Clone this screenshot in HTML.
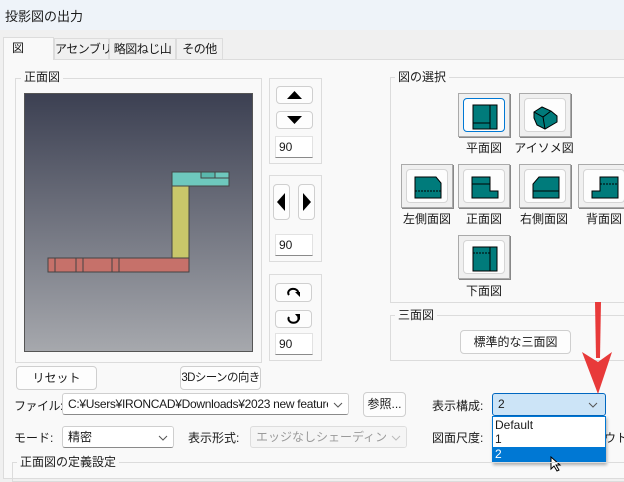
<!DOCTYPE html>
<html><head><meta charset="utf-8"><style>
*{box-sizing:border-box;margin:0;padding:0;white-space:nowrap}
body{width:624px;height:472px;overflow:hidden;background:#f0f0f0;font-family:"Liberation Sans","Noto Sans CJK JP",sans-serif;font-size:12px;color:#1a1a1a;position:relative}
.a{position:absolute}
.title{left:0;top:0;width:624px;height:30px;background:#eef3f9;padding:6px 5px;font-size:13px}
.panel{left:3px;top:59px;width:624px;height:420px;background:#f9f9f9;border:1px solid #dcdcdc}
.tab{top:38px;height:21px;border:1px solid #dcdcdc;border-bottom:none;background:#f0f0f0;text-align:center;line-height:20px;letter-spacing:-0.5px}
.grp{border:1px solid #dcdcdc}
.lg{background:#f9f9f9;padding:0 3px;line-height:14px}
.btn{background:#fdfdfd;border:1px solid #cfcfcf;border-radius:4px;text-align:center}
.inp{background:#fff;border:1px solid #e2e2e2;border-bottom:1px solid #8a8a8a;padding-left:3px;line-height:20px}
.vb{width:52px;height:44px;background:#f0f0f0;border:1px solid #aaa;box-shadow:1px 1px 0 #888}
.vb .in{position:absolute;left:4px;top:4px;width:42px;height:34px;background:#fdfdfd;border:1px solid #d5d5d5;border-radius:4px}
.lbl{text-align:center;width:70px}
.cb{background:#fff;border:1px solid #cfcfcf;border-bottom:1px solid #8a8a8a;border-radius:3px;padding-left:5px;line-height:20px;overflow:hidden}
.chev{position:absolute;right:0;top:0;width:20px;height:20px;background:inherit}
</style></head><body>
<div class="a title">投影図の出力</div>
<div class="a panel"></div>
<div class="a tab" style="left:3px;top:37px;width:51px;height:23px;background:#f9f9f9;text-align:left;padding-left:8px">図</div>
<div class="a tab" style="left:54px;width:55px">アセンブリ</div>
<div class="a tab" style="left:109px;width:67px">略図ねじ山</div>
<div class="a tab" style="left:176px;width:47px">その他</div>

<div class="a grp" style="left:15px;top:78px;width:247px;height:285px"></div>
<div class="a lg" style="left:21px;top:70px">正面図</div>
<div class="a" style="left:24px;top:93px;width:229px;height:259px;border:1px solid #555;background:linear-gradient(#3c4052,#a6a8ad)"></div>
<svg class="a" style="left:24px;top:93px" width="229" height="259">
<rect x="148" y="79" width="57" height="14" fill="#6ec8bd" stroke="#444"/>
<rect x="177" y="79" width="14" height="6" fill="#5ab8ad" stroke="#444"/>
<rect x="191" y="79" width="14" height="6" fill="#6ec8bd" stroke="#444"/>
<rect x="148" y="93" width="17" height="72" fill="#c9c76a" stroke="#444"/>
<rect x="24" y="165" width="141" height="14" fill="#c6716a" stroke="#444"/>
<line x1="31" y1="165" x2="31" y2="179" stroke="#444"/>
<line x1="52" y1="165" x2="52" y2="179" stroke="#444"/>
<line x1="59" y1="165" x2="59" y2="179" stroke="#444"/>
<line x1="88" y1="165" x2="88" y2="179" stroke="#444"/>
<line x1="95" y1="165" x2="95" y2="179" stroke="#444"/>
</svg>

<div class="a grp" style="left:269px;top:78px;width:53px;height:86px"></div>
<div class="a btn" style="left:276px;top:86px;width:37px;height:18px"><svg width="35" height="16"><path d="M10 12L17.5 4L25 12Z"/></svg></div>
<div class="a btn" style="left:276px;top:111px;width:37px;height:18px"><svg width="35" height="16"><path d="M10 4L17.5 12L25 4Z"/></svg></div>
<div class="a inp" style="left:275px;top:136px;width:38px;height:22px">90</div>

<div class="a grp" style="left:269px;top:175px;width:53px;height:87px"></div>
<div class="a btn" style="left:273px;top:184px;width:17px;height:36px"><svg width="15" height="34"><path d="M3 17L11 8V26Z"/></svg></div>
<div class="a btn" style="left:298px;top:184px;width:17px;height:36px"><svg width="15" height="34"><path d="M12 17L4 8V26Z"/></svg></div>
<div class="a inp" style="left:275px;top:234px;width:38px;height:22px">90</div>

<div class="a grp" style="left:269px;top:274px;width:53px;height:87px"></div>
<div class="a btn" style="left:275px;top:283px;width:37px;height:19px"><svg width="35" height="17"><path d="M13 11A5 4 0 1 1 22 10" fill="none" stroke="#000" stroke-width="2"/><path d="M19 8L24 8L24 13Z"/></svg></div>
<div class="a btn" style="left:275px;top:310px;width:37px;height:18px"><svg width="35" height="16"><path d="M13 6A5 4 0 1 0 22 6" fill="none" stroke="#000" stroke-width="2"/><path d="M19 3L24 3L24 9Z"/></svg></div>
<div class="a inp" style="left:275px;top:333px;width:38px;height:22px">90</div>

<div class="a grp" style="left:390px;top:77px;width:240px;height:226px"></div>
<div class="a lg" style="left:395px;top:70px">図の選択</div>
<div class="a vb" style="left:458px;top:93px"><div class="in" style="border:1px solid #0078d4"></div><svg class="a" style="left:13px;top:10px" width="26" height="26"><rect x="1" y="1" width="24" height="24" fill="#007b7b" stroke="#000"/><line x1="18" y1="1" x2="18" y2="25" stroke="#000"/><line x1="1" y1="19" x2="18" y2="19" stroke="#000"/></svg></div>
<div class="a vb" style="left:519px;top:93px"><div class="in"></div><svg class="a" style="left:13px;top:10px" width="26" height="26"><path d="M1 8L9 3L18 7L24 12L24 18L12 25L4 21L1 14Z" fill="#007b7b" stroke="#000"/><path d="M1 8L10 13L18 7M10 13L12 25" fill="none" stroke="#000"/></svg></div>
<div class="a lbl" style="left:449px;top:139px">平面図</div>
<div class="a lbl" style="left:509px;top:139px">アイソメ図</div>

<div class="a vb" style="left:401px;top:164px"><div class="in"></div><svg class="a" style="left:12px;top:11px" width="28" height="24"><path d="M1 1H22L27 7V22H1Z" fill="#007b7b" stroke="#000"/><line x1="1" y1="15" x2="27" y2="15" stroke="#000" stroke-dasharray="2 1"/></svg></div>
<div class="a vb" style="left:458px;top:164px"><div class="in"></div><svg class="a" style="left:12px;top:11px" width="28" height="24"><path d="M1 1H19V15H27V22H1Z" fill="#007b7b" stroke="#000"/><line x1="1" y1="8" x2="19" y2="8" stroke="#000"/></svg></div>
<div class="a vb" style="left:519px;top:164px"><div class="in"></div><svg class="a" style="left:12px;top:11px" width="28" height="24"><path d="M7 1H27V22H1V8Z" fill="#007b7b" stroke="#000"/><line x1="1" y1="15" x2="27" y2="15" stroke="#000"/></svg></div>
<div class="a vb" style="left:578px;top:164px"><div class="in"></div><svg class="a" style="left:12px;top:11px" width="28" height="24"><path d="M9 1H27V22H1V15H9Z" fill="#007b7b" stroke="#000"/><line x1="9" y1="8" x2="27" y2="8" stroke="#000" stroke-dasharray="2 1"/></svg></div>
<div class="a lbl" style="left:392px;top:210px">左側面図</div>
<div class="a lbl" style="left:449px;top:210px">正面図</div>
<div class="a lbl" style="left:509px;top:210px">右側面図</div>
<div class="a lbl" style="left:569px;top:210px">背面図</div>

<div class="a vb" style="left:458px;top:235px"><div class="in"></div><svg class="a" style="left:13px;top:10px" width="26" height="26"><rect x="1" y="1" width="24" height="24" fill="#007b7b" stroke="#000"/><line x1="18" y1="1" x2="18" y2="25" stroke="#000"/><line x1="1" y1="7" x2="18" y2="7" stroke="#000" stroke-dasharray="2 1"/></svg></div>
<div class="a lbl" style="left:449px;top:282px">下面図</div>

<div class="a grp" style="left:390px;top:315px;width:240px;height:46px"></div>
<div class="a lg" style="left:395px;top:308px">三面図</div>
<div class="a btn" style="left:460px;top:330px;width:111px;height:24px;line-height:22px">標準的な三面図</div>

<div class="a btn" style="left:16px;top:366px;width:81px;height:24px;line-height:22px">リセット</div>
<div class="a btn" style="left:180px;top:366px;width:81px;height:24px;line-height:22px;letter-spacing:-0.6px;font-size:11.5px">3Dシーンの向き</div>

<div class="a" style="left:14px;top:397px;letter-spacing:-0.5px">ファイル:</div>
<div class="a cb" style="left:62px;top:393px;width:287px;height:22px;letter-spacing:-0.3px">C:¥Users¥IRONCAD¥Downloads¥2023 new features<svg class="chev" style="background:#fff"><path d="M6 9L10 13L14 9" fill="none" stroke="#555"/></svg></div>
<div class="a btn" style="left:363px;top:392px;width:43px;height:25px;line-height:23px">参照...</div>
<div class="a" style="left:432px;top:397px">表示構成:</div>
<div class="a cb" style="left:492px;top:393px;width:114px;height:23px;background:#cce4f7;border:1px solid #0067c0">2<svg class="chev" style="right:2px"><path d="M6 9L10 13L14 9" fill="none" stroke="#555"/></svg></div>

<div class="a" style="left:14px;top:429px">モード:</div>
<div class="a cb" style="left:62px;top:426px;width:112px;height:22px">精密<svg class="chev"><path d="M6 9L10 13L14 9" fill="none" stroke="#555"/></svg></div>
<div class="a" style="left:188px;top:429px">表示形式:</div>
<div class="a cb" style="left:250px;top:426px;width:157px;height:22px;color:#9a9a9a;background:#f5f5f5;border-color:#ddd">エッジなしシェーディング<svg class="chev"><path d="M6 9L10 13L14 9" fill="none" stroke="#bbb"/></svg></div>
<div class="a" style="left:432px;top:429px">図面尺度:</div>
<div class="a" style="left:604px;top:429px;width:20px;overflow:hidden">ウト設</div>

<div class="a" style="left:492px;top:416px;width:114px;height:47px;background:#fff;border:1px solid #0078d4;box-shadow:1px 2px 3px rgba(0,0,0,.3)">
<div style="padding-left:2px;height:15px;line-height:16px">Default</div>
<div style="padding-left:2px;height:15px;line-height:15px">1</div>
<div style="padding-left:2px;height:15px;line-height:15px;background:#0078d4;color:#fff">2</div>
</div>
<svg class="a" style="left:550px;top:456px" width="14" height="16"><path d="M1 1V13L4 10L7 15L9 14L6 9H10Z" fill="#fff" stroke="#000"/></svg>

<div class="a grp" style="left:12px;top:462px;width:620px;height:20px"></div>
<div class="a lg" style="left:17px;top:455px">正面図の定義設定</div>

<svg class="a" style="left:578px;top:300px" width="40" height="95"><path d="M17 2L23 2L22 58L18 58Z" fill="#e83a3a"/><path d="M4 52L20 94L34 52L20 62Z" fill="#e83a3a"/></svg>
</body></html>
